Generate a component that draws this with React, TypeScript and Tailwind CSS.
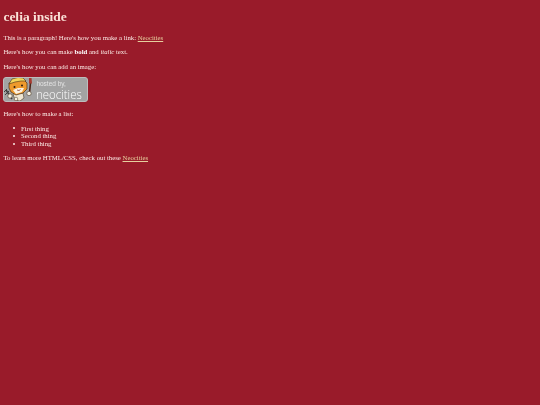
import React from "react";

const Badge = () => {
  return (
    <div className="flex mt-[7px] mb-[8px] w-[85px] h-[25px] rounded-[3px] bg-[#a3a3a3] border border-[#bdbdbd] overflow-hidden">
      <svg className="shrink-0 -ml-px -mt-px" width="33" height="25" viewBox="0 0 33 25">
        {/* fork and left paw */}
        <path d="M3 13 L9 22" stroke="#3f3f3f" strokeWidth="1.5" />
        <path d="M1 15 L4 12 M2 18 L6 14" stroke="#3f3f3f" strokeWidth="1" />
        <circle cx="7" cy="19" r="2.2" fill="#f6f0e0" stroke="#4a3a28" strokeWidth="0.6" />
        {/* body */}
        <path d="M10 17 L20 16 L21 21 L17 24 L12 23 Z" fill="#efe6d2" stroke="#4a3a28" strokeWidth="0.6" />
        <circle cx="13" cy="22" r="1.8" fill="#f6f0e0" stroke="#4a3a28" strokeWidth="0.5" />
        {/* brush */}
        <path d="M27.5 6 L26.5 16" stroke="#4a2418" strokeWidth="1.6" />
        <path d="M26 1 L28.5 0.5 L29 6.5 L26 6.5 Z" fill="#a83a30" />
        <circle cx="26" cy="16.5" r="2.2" fill="#f6f0e0" stroke="#4a3a28" strokeWidth="0.6" />
        {/* cat head */}
        <path d="M6 6 L12 4 L20 2 L24 6 L24 12 L20 16 L13 18 L8 15 L6 11 Z" fill="#ee9a2c" stroke="#4a3018" strokeWidth="0.7" />
        <path d="M6 7 L9 2 L15 0.5 L20 1 L23 4 L18 4 L12 5 Z" fill="#f4d65a" stroke="#4a3018" strokeWidth="0.6" />
        <path d="M10 13 L15 11 L21 11 L19 15 L13 17 Z" fill="#fbf1de" />
        <circle cx="11.5" cy="10" r="1" fill="#2a1a10" />
        <circle cx="19" cy="8.5" r="1" fill="#2a1a10" />
        <path d="M14 13 L16 13.5 L17.5 12.5" stroke="#7a2a20" strokeWidth="0.7" fill="none" />
      </svg>
      <div className="flex flex-col pt-[2.5px]">
        <span className="text-[#e4e4e4] text-[6.5px] leading-[6px] font-['Liberation_Sans',sans-serif]">hosted by,</span>
        <span className="mt-[1px] text-white text-[13px] leading-[12px] font-['Open_Sans',sans-serif] font-light scale-x-[0.88] origin-left">neocities</span>
      </div>
    </div>
  );
};

const App = () => {
  return (
    <div className="min-h-[405px] bg-[#991b2a] p-[3.4px] pt-[4.4px]">
      <div className="blur-[0.2px] text-[#fbe9e4] text-[6.75px] leading-[7.6px] font-['Liberation_Serif',serif]">
        <h1 className="text-[13.5px] leading-[15.5px] font-bold text-[#fae0d6] mt-[5px] mb-[9px]">celia inside</h1>
        <p className="my-[6.75px]">
          This is a paragraph! Here's how you make a link:{" "}
          <a href="#" className="underline text-[#e6cf9e]">Neocities</a>
        </p>
        <p className="my-[6.75px]">
          Here's how you can make <strong className="font-bold text-white">bold</strong> and <em className="italic">italic</em> text.
        </p>
        <p className="my-[6.75px]">Here's how you can add an image:</p>
        <Badge />
        <p className="my-[6.75px]">Here's how to make a list:</p>
        <ul className="my-[6.75px] pl-[10px]">
          <li className="flex items-center gap-[5.5px]"><span className="w-[2px] h-[2px] rounded-full bg-[#fbe9e4]" />First thing</li>
          <li className="flex items-center gap-[5.5px]"><span className="w-[2px] h-[2px] rounded-full bg-[#fbe9e4]" />Second thing</li>
          <li className="flex items-center gap-[5.5px]"><span className="w-[2px] h-[2px] rounded-full bg-[#fbe9e4]" />Third thing</li>
        </ul>
        <p className="my-[6.75px] -mt-[0.25px]">
          To learn more HTML/CSS, check out these{" "}
          <a href="#" className="underline text-[#e6cf9e]">Neocities</a>
        </p>
      </div>
    </div>
  );
};

export default App;
